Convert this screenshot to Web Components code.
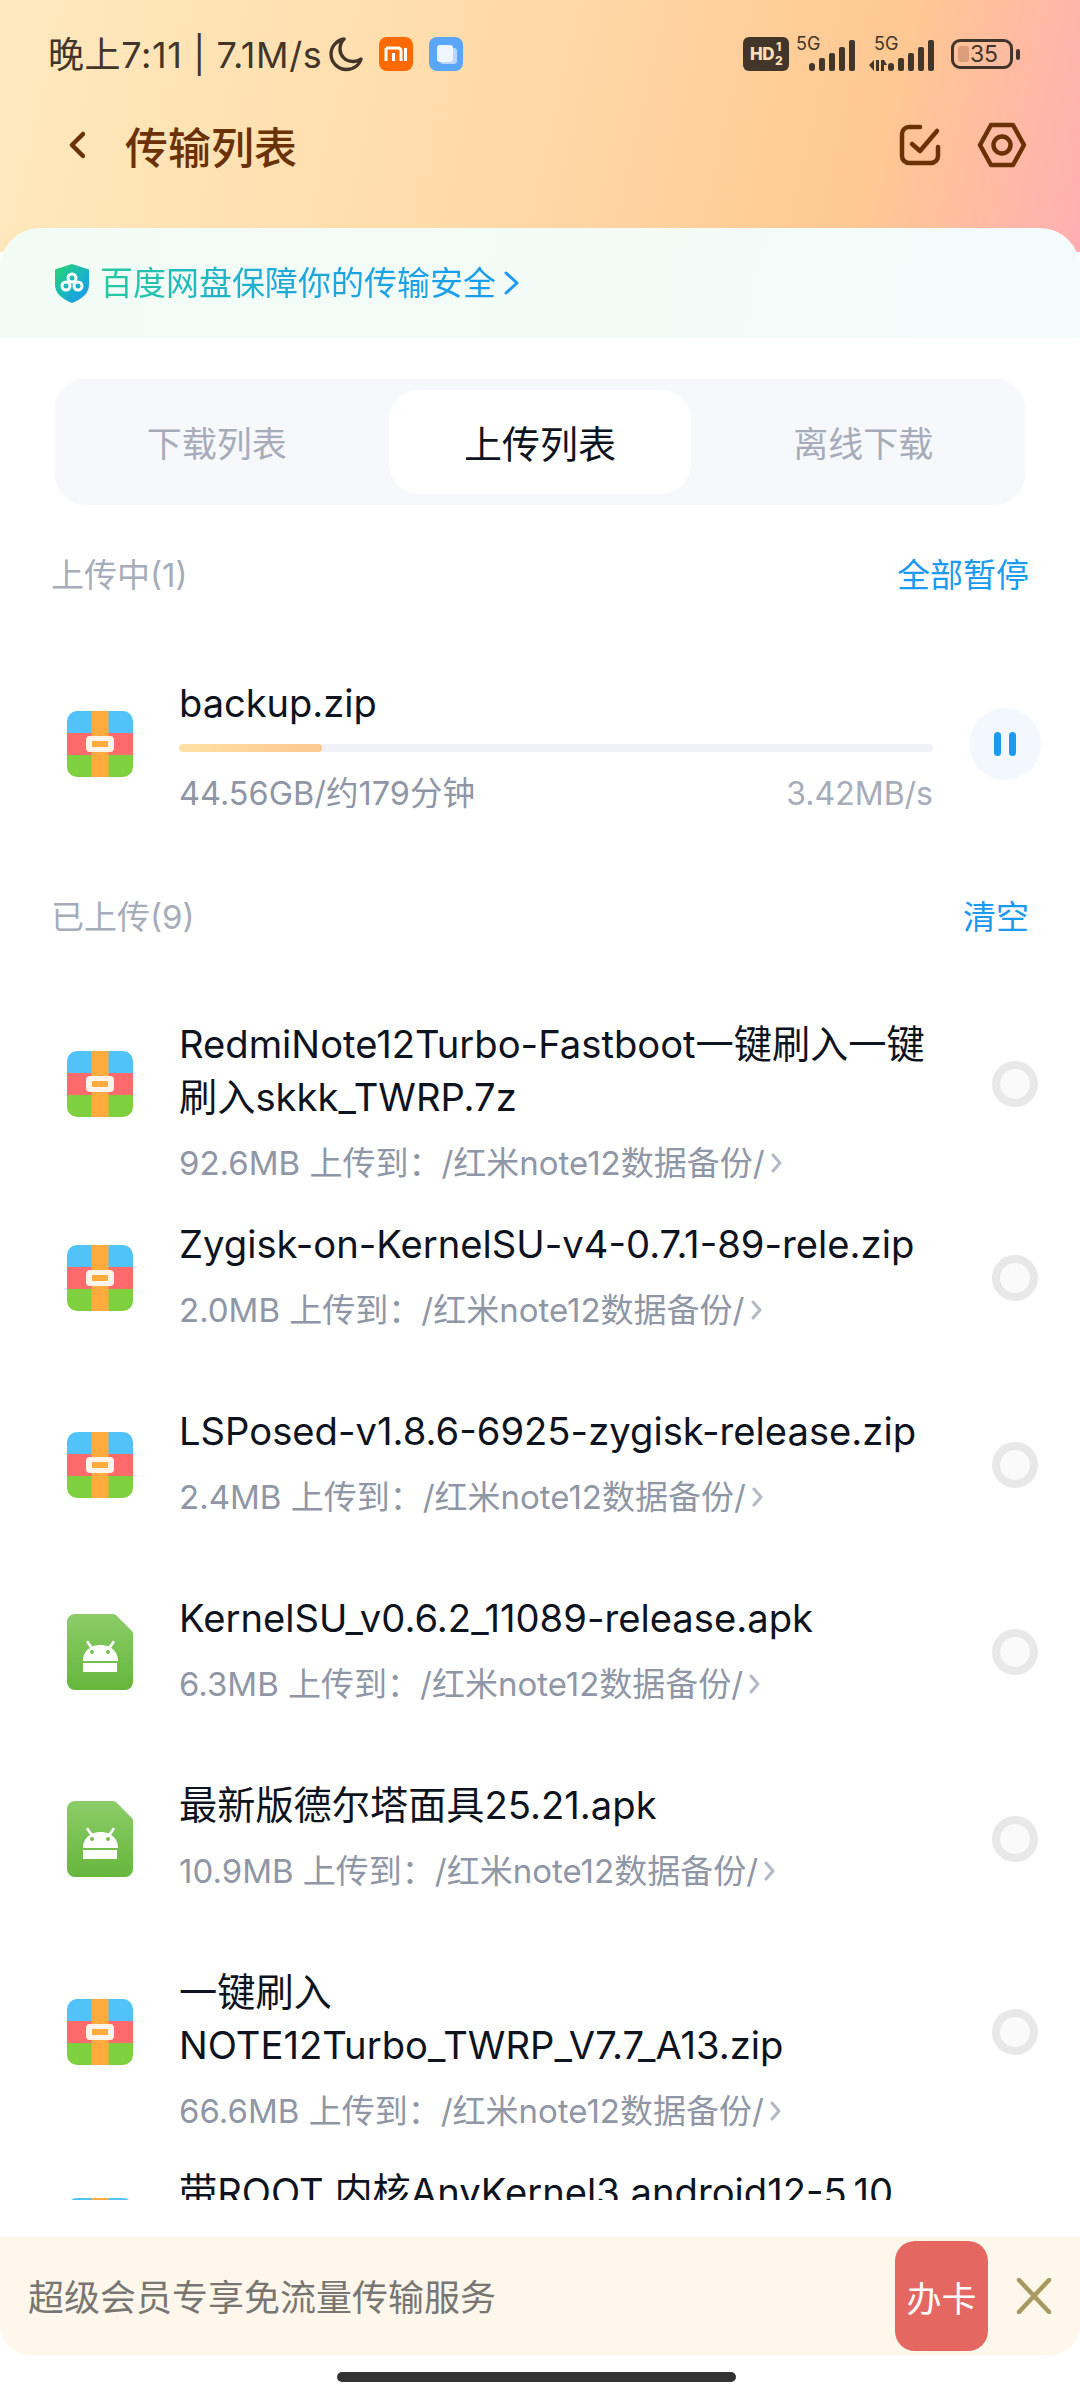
<!DOCTYPE html>
<html lang="zh">
<head>
<meta charset="utf-8">
<title>传输列表</title>
<style>
  html, body { margin: 0; padding: 0; background: #fff; }
  body { font-family: Inter, "Noto Sans CJK SC", sans-serif; }
</style>
</head>
<body>
<transfer-page>
  <status-bar></status-bar>
  <nav-bar>传输列表</nav-bar>
  <safety-banner>百度网盘保障你的传输安全</safety-banner>
  <tab-switch></tab-switch>
  <section-head action="全部暂停">上传中(1)</section-head>
  <upload-row name="backup.zip" info="44.56GB/约179分钟" speed="3.42MB/s" progress="19"></upload-row>
  <section-head action="清空">已上传(9)</section-head>
  <file-list>
    <file-row size="92.6MB" type="zip">RedmiNote12Turbo-Fastboot一键刷入一键刷入skkk_TWRP.7z</file-row>
    <file-row size="2.0MB" type="zip">Zygisk-on-KernelSU-v4-0.7.1-89-rele.zip</file-row>
    <file-row size="2.4MB" type="zip">LSPosed-v1.8.6-6925-zygisk-release.zip</file-row>
    <file-row size="6.3MB" type="apk">KernelSU_v0.6.2_11089-release.apk</file-row>
    <file-row size="10.9MB" type="apk">最新版德尔塔面具25.21.apk</file-row>
    <file-row size="66.6MB" type="zip">一键刷入<br>NOTE12Turbo_TWRP_V7.7_A13.zip</file-row>
    <file-row size="" type="zip" style="min-height:198px">带ROOT 内核AnyKernel3 android12-5.10</file-row>
  </file-list>
  <promo-bar action="办卡">超级会员专享免流量传输服务</promo-bar>
  <home-bar></home-bar>
</transfer-page>

<script>
const FONT = 'Inter, "Noto Sans CJK SC", sans-serif';

function define(tag, html) {
  customElements.define(tag, class extends HTMLElement {
    constructor() {
      super();
      this.attachShadow({mode: 'open'});
    }
    connectedCallback() {
      const get = (name) => this.getAttribute(name) || '';
      this.shadowRoot.innerHTML = typeof html === 'function' ? html(get) : html;
    }
  });
}

define('transfer-page', `
  <style>
    :host {
      display: flex;
      flex-direction: column;
      width: 1080px;
      height: 2400px;
      overflow: hidden;
      font-family: ${FONT};
      background:
        linear-gradient(103deg, #ffe9bf 0%, #ffdcaa 42%, #fec892 80%, #ffb6a8 94%, #ffaeb2 100%) top / 100% 252px no-repeat,
        #fff;
    }
  </style>
  <slot></slot>
`);

define('status-bar', `
  <style>
    :host {
      display: flex;
      align-items: center;
      height: 36px;
      padding: 36px 60px 0 48px;
      color: #42352a;
      font-size: 36px;
    }
    .time { white-space: nowrap; position: relative; top: -2px; letter-spacing: 0.6px; }
    svg { display: block; flex: none; }
    .moon { margin-left: 7px; }
    .mi { margin-left: 16px; }
    .app { margin-left: 16px; }
    .right { margin-left: auto; display: flex; align-items: center; }
    .hd {
      width: 46px; height: 34px; border-radius: 6px; background: #42352a;
      color: #fee0b4; font-size: 17px; font-weight: 800; display: flex;
      align-items: center; justify-content: center; gap: 1px; letter-spacing: -0.5px;
    }
    .frac { display: flex; flex-direction: column; font-size: 12px; line-height: 14px; align-items: center; }
    .sig { position: relative; width: 62px; height: 34px; }
    .sig b {
      position: absolute; top: -3px; left: 1px; font-size: 18px; font-weight: 400;
      line-height: 20px; color: #42352a;
    }
    .sig svg { position: absolute; left: 0; bottom: 0; }
    .batt {
      position: relative; width: 62px; height: 30px; box-sizing: border-box;
      border: 3px solid #42352a; border-radius: 9px; font-size: 23px; line-height: 24px;
      text-align: center; color: #42352a; text-indent: 4px;
    }
    .batt::before {
      content: ''; position: absolute; left: 4px; top: 4px; bottom: 4px; width: 11px;
      background: rgba(140, 80, 50, .3); border-radius: 3px;
    }
    .nub { width: 4px; height: 11px; background: #42352a; border-radius: 2px; margin-left: 3px; }
  </style>
  <span class="time">晚上7:11 | 7.1M/s</span>
  <svg class="moon" width="34" height="36" viewBox="0 0 34 36" fill="none" stroke="#42352a" stroke-width="3.4" stroke-linecap="round" stroke-linejoin="round">
    <path d="M15 3C7.5 4.5 2 10.5 2 18c0 8.5 7 15.5 15.5 15.5 7 0 12.5-4 14.5-10.5-2.2 1.8-5.5 2.5-8 2.5C16 25.5 11 19.5 11 13c0-3.5 1.5-7.5 4-10z"/>
  </svg>
  <svg class="mi" width="34" height="34" viewBox="0 0 34 34">
    <rect width="34" height="34" rx="8" fill="#ff6a00"/>
    <path d="M7 11h12a3 3 0 0 1 3 3v10M7 11v13M14.5 16v8M26.5 11v13" fill="none" stroke="#fff" stroke-width="3"/>
  </svg>
  <svg class="app" width="34" height="34" viewBox="0 0 34 34">
    <rect width="34" height="34" rx="8" fill="#5aa6fa"/>
    <rect x="11" y="11" width="17" height="16" rx="3" fill="#b9d8fc"/>
    <rect x="8" y="8" width="16" height="17" rx="3" fill="#eef6ff"/>
  </svg>
  <div class="right">
    <div class="hd"><span>HD</span><span class="frac"><span>1</span><span>2</span></span></div>
    <div class="sig" style="margin-left:6px;width:62px">
      <b>5G</b>
      <svg width="62" height="32" viewBox="0 0 62 32" fill="#42352a">
        <rect x="14" y="24" width="6" height="8" rx="3"/><rect x="24" y="19" width="6" height="13" rx="2"/>
        <rect x="34" y="14" width="6" height="18" rx="2"/><rect x="44" y="8" width="6" height="24" rx="2"/>
        <rect x="54" y="1" width="6" height="31" rx="2"/>
      </svg>
    </div>
    <div class="sig" style="margin-left:12px;width:68px">
      <b style="left:5px">5G</b>
      <svg width="68" height="32" viewBox="0 0 68 32" fill="#42352a">
        <path d="M0 26l5-5v11zM7 21h3v11H7zM12 21h3l3 5h-3v6h-3z"/>
        <rect x="19" y="24" width="6" height="8" rx="3"/><rect x="29" y="19" width="6" height="13" rx="2"/>
        <rect x="39" y="14" width="6" height="18" rx="2"/><rect x="49" y="8" width="6" height="24" rx="2"/>
        <rect x="59" y="1" width="6" height="31" rx="2"/>
      </svg>
    </div>
    <div class="batt" style="margin-left:14px">35</div>
    <div class="nub"></div>
  </div>
`);

define('nav-bar', `
  <style>
    :host {
      display: flex;
      align-items: center;
      height: 156px;
      box-sizing: border-box;
      padding: 0 53px 10px 69px;
      color: #6b3208;
    }
    .title { font-size: 43px; font-weight: 500; margin: 5px 0 0 40px; line-height: 56px; }
    svg { display: block; flex: none; }
    .check { margin-left: auto; }
    .gear { margin-left: 36px; }
  </style>
  <svg width="16" height="28" viewBox="0 0 16 28" fill="none" stroke="#6b3208" stroke-width="4.5" stroke-linecap="round" stroke-linejoin="round"><path d="M14 3L3 14l11 11"/></svg>
  <span class="title"><slot></slot></span>
  <svg class="check" width="42" height="42" viewBox="0 0 42 42" fill="none" stroke="#6b3208" stroke-width="4.5" stroke-linecap="round" stroke-linejoin="round">
    <path d="M21 3H10a7 7 0 0 0-7 7v22a7 7 0 0 0 7 7h22a7 7 0 0 0 7-7v-9"/>
    <path d="M13 20l8 7L38 7"/>
  </svg>
  <svg class="gear" width="50" height="46" viewBox="0 0 50 46" fill="none" stroke="#6b3208" stroke-width="4.5" stroke-linejoin="round">
    <path d="M14 3h22l11 20-11 20H14L3 23z"/>
    <circle cx="25" cy="23" r="8.5"/>
  </svg>
`);

define('safety-banner', `
  <style>
    :host {
      display: flex;
      align-items: center;
      height: 110px;
      box-sizing: border-box;
      padding: 0 0 0 55px;
      border-radius: 40px 40px 0 0;
      background: linear-gradient(100deg, #f2fcf5 0%, #f3fbf7 60%, #f4fbfb 100%);
    }
    svg { display: block; flex: none; }
    .text {
      margin-left: 11px;
      font-size: 33px;
      line-height: 44px;
      background: linear-gradient(90deg, #25c9a0 0%, #1ea9d8 45%, #1a9bf0 100%);
      -webkit-background-clip: text;
      background-clip: text;
      color: transparent;
    }
    .arrow { margin-left: 8px; }
  </style>
  <svg width="34" height="39" viewBox="0 0 34 39">
    <defs>
      <linearGradient id="sh" x1="0" y1="0" x2="1" y2="1">
        <stop offset="0" stop-color="#27d66a"/><stop offset=".55" stop-color="#18b5c4"/><stop offset="1" stop-color="#1a8ff5"/>
      </linearGradient>
    </defs>
    <path d="M17 0l17 5.5V21c0 8.5-7.5 14-17 18C7.5 35 0 29.5 0 21V5.5z" fill="url(#sh)"/>
    <g fill="none" stroke="#fff" stroke-width="3">
      <circle cx="17" cy="14" r="4"/><circle cx="11" cy="22" r="4"/><circle cx="23" cy="22" r="4"/>
    </g>
  </svg>
  <span class="text"><slot></slot></span>
  <svg class="arrow" width="15" height="24" viewBox="0 0 15 24" fill="none" stroke="#1a9bf0" stroke-width="3" stroke-linecap="round" stroke-linejoin="round"><path d="M2 2l11 10L2 22"/></svg>
`);

define('tab-switch', `
  <style>
    :host {
      display: flex;
      gap: 22px;
      margin: 41px 55px 46px;
      padding: 11px;
      height: 104px;
      border-radius: 30px;
      background: #f7f8fc;
    }
    span {
      flex: 1;
      display: flex;
      align-items: center;
      justify-content: center;
      border-radius: 30px;
      font-size: 35px;
      color: #a6acb9;
      padding-bottom: 2px;
    }
    .on { background: #fff; color: #0e1320; font-size: 38px; }
  </style>
  <span>下载列表</span>
  <span class="on">上传列表</span>
  <span>离线下载</span>
`);

define('section-head', (get) => `
  <style>
    :host {
      display: flex;
      justify-content: space-between;
      align-items: center;
      height: 44px;
      padding: 0 51px;
      font-size: 33px;
      color: #a6acb9;
    }
    .act { color: #1a9bf0; }
  </style>
  <span><slot></slot></span>
  <span class="act">${get('action')}</span>
`);

define('file-icon', (get) => get('type') === 'apk' ? `
  <style>:host { display: block; width: 66px; flex: none; } svg { display: block; }</style>
  <svg width="66" height="76" viewBox="0 0 66 76">
    <defs>
      <linearGradient id="ag" x1="0" y1="0" x2="0" y2="1">
        <stop offset="0" stop-color="#8ccd68"/><stop offset="1" stop-color="#66b63c"/>
      </linearGradient>
    </defs>
    <path d="M8 0h38a5 5 0 0 1 3.5 1.5l15 15A5 5 0 0 1 66 20v48a8 8 0 0 1-8 8H8a8 8 0 0 1-8-8V8a8 8 0 0 1 8-8z" fill="url(#ag)"/>
    <path d="M16 47c0-6 2.5-10.5 7-13l-4-6 2-1.5 4.5 6c2.5-1 5-1.5 8-1.5s5.5.5 8 1.5l4.5-6 2 1.5-4 6c4.5 2.5 7 7 7 13z" fill="#fff"/>
    <circle cx="25" cy="38" r="2" fill="#77c04f"/><circle cx="41" cy="38" r="2" fill="#77c04f"/>
    <rect x="16" y="49" width="34" height="9" fill="#fff"/>
  </svg>
` : `
  <style>:host { display: block; width: 66px; flex: none; } svg { display: block; }</style>
  <svg width="66" height="66" viewBox="0 0 66 66">
    <clipPath id="zc"><rect width="66" height="66" rx="10"/></clipPath>
    <g clip-path="url(#zc)">
      <rect width="66" height="22" fill="#52c3f8"/>
      <rect y="22" width="66" height="22" fill="#ff6a6c"/>
      <rect y="44" width="66" height="22" fill="#7fd03f"/>
      <rect x="24.5" width="17" height="66" fill="#ffab3d"/>
      <rect x="19" y="25" width="28" height="16" rx="4" fill="#fff3ea"/>
      <rect x="25" y="30" width="16" height="6" rx="1" fill="#ffab3d"/>
    </g>
  </svg>
`);

define('upload-row', (get) => `
  <style>
    :host {
      display: flex;
      align-items: center;
      height: 298px;
      padding: 0 39px 0 67px;
    }
    .body { width: 754px; margin: 3px 36px 0 46px; }
    .name { font-size: 38px; line-height: 54px; color: #0e1320; padding-top: 1px; margin-bottom: -1px; }
    .track { height: 8px; margin-top: 15px; border-radius: 4px; background: #f1f2f7; overflow: hidden; }
    .fill { height: 100%; border-radius: 4px; background: linear-gradient(90deg, #fee1a6, #fdc68f); width: ${get('progress')}%; }
    .info {
      display: flex; justify-content: space-between; margin-top: 20px;
      font-size: 32.5px; line-height: 44px; color: #8f96a6;
    }
    .info span:last-child { color: #a6acb9; font-size: 32px; }
    .pause {
      width: 72px; height: 72px; border-radius: 50%; background: #f2f8fe;
      display: flex; align-items: center; justify-content: center; gap: 8px; flex: none;
    }
    .pause i { display: block; width: 7px; height: 24px; border-radius: 4px; background: #1a9bf0; }
  </style>
  <file-icon type="zip"></file-icon>
  <div class="body">
    <div class="name">${get('name')}</div>
    <div class="track"><div class="fill"></div></div>
    <div class="info"><span>${get('info')}</span><span>${get('speed')}</span></div>
  </div>
  <div class="pause"><i></i><i></i></div>
`);

define('file-list', `
  <style>
    :host {
      display: block;
      height: 1216px;
      margin-top: 47px;
      margin-bottom: 37px;
      overflow: hidden;
    }
  </style>
  <slot></slot>
`);

define('file-row', (get) => `
  <style>
    :host {
      display: flex;
      align-items: center;
      min-height: 187px;
      padding: 0 42px 0 67px;
    }
    .body { align-self: flex-start; width: 760px; margin: 0 53px 0 46px; padding-top: 34px; }
    .name { font-size: 38.2px; line-height: 53px; color: #0e1320; overflow-wrap: anywhere; }
    .sub {
      display: flex; align-items: center; margin-top: 16px; padding-top: 1px; margin-bottom: -1px;
      font-size: 33px; line-height: 44px; color: #8f96a6; white-space: pre;
    }
    .sub svg { margin-left: 6px; }
    .radio {
      flex: none; width: 46px; height: 46px; box-sizing: border-box;
      border: 8px solid #e8e8e8; border-radius: 50%; background: #fafafa;
    }
  </style>
  <file-icon type="${get('type')}"></file-icon>
  <div class="body">
    <div class="name"><slot></slot></div>
    ${get('size') ? `<div class="sub"><span>${get('size')} 上传到：/红米note12数据备份/</span><svg width="12" height="22" viewBox="0 0 12 22" fill="none" stroke="#b3b8c4" stroke-width="3" stroke-linecap="round" stroke-linejoin="round"><path d="M2 3l7 8-7 8"/></svg></div>` : ''}
  </div>
  <div class="radio"></div>
`);

define('promo-bar', (get) => `
  <style>
    :host {
      display: flex;
      align-items: center;
      height: 118px;
      padding: 0 28px;
      border-radius: 0 0 30px 30px;
      background: #fff7eb;
      font-size: 36px;
      color: #777672;
      flex: none;
    }
    .txt { padding-bottom: 3px; }
    .btn {
      margin-left: auto;
      width: 93px; height: 110px;
      border-radius: 20px;
      background: #e46861;
      color: #fff;
      font-size: 35px;
      display: flex; align-items: center; justify-content: center;
    }
    svg { display: block; margin-left: 28px; flex: none; }
  </style>
  <span class="txt"><slot></slot></span>
  <span class="btn">${get('action')}</span>
  <svg width="36" height="36" viewBox="0 0 36 36" fill="none" stroke="#a89a5f" stroke-width="4.5" stroke-linecap="round"><path d="M3 2l30 32M33 2L3 34"/></svg>
`);

define('home-bar', `
  <style>
    :host { display: block; width: 399px; height: 10px; border-radius: 5px; background: #333; margin: 17px 0 0 337px; flex: none; }
  </style>
`);
</script>
</body>
</html>
